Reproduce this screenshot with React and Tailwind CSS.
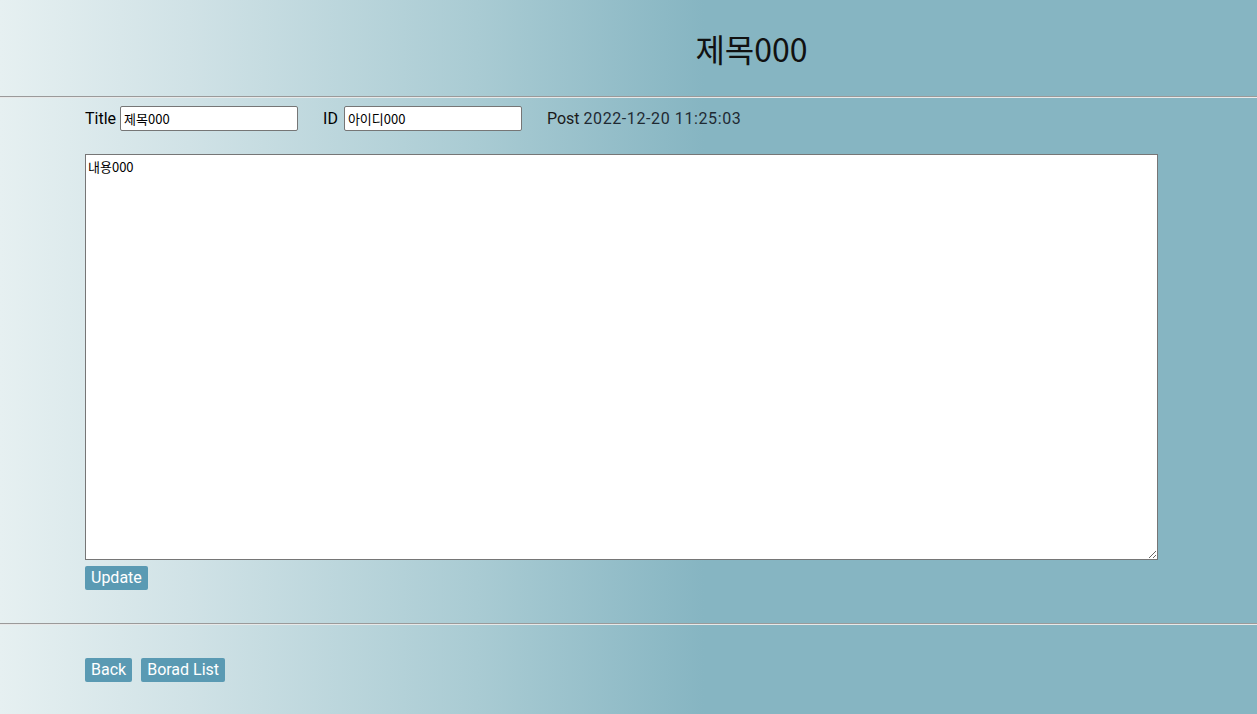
export default function App() {
  const font = { fontFamily: 'Roboto, "Noto Sans CJK KR", sans-serif' }
  return (
    <div
      className="min-h-[714px] bg-[linear-gradient(to_right,#e6f0f1_0%,#d0e2e6_15%,#a9cbd3_38%,#86b5c2_56%,#86b5c2_100%)] text-black"
      style={font}
    >
      <header className="h-[96px] flex items-center justify-center pl-[246px]">
        <h1 className="text-[32px] font-normal font-['Noto_Sans_CJK_KR',sans-serif] leading-none text-[#111]">제목000</h1>
      </header>
      <hr className="border-0 border-t border-t-[#9a9a9a] border-b border-b-[#e8e8e8] h-0" />

      <section className="pl-[85px] pt-[8px]">
        <div className="flex items-center h-[25px] text-[16px]">
          <label className="flex items-center">
            <span className="mr-[4px]">Title</span>
            <input
              className="w-[178px] h-[25px] bg-white border border-[#767676] rounded-[2px] px-[3px] text-[13px] font-['Noto_Sans_CJK_KR',sans-serif] outline-none"
              defaultValue="제목000"
            />
          </label>
          <label className="flex items-center ml-[25px]">
            <span className="mr-[6px]">ID</span>
            <input
              className="w-[178px] h-[25px] bg-white border border-[#767676] rounded-[2px] px-[3px] text-[13px] font-['Noto_Sans_CJK_KR',sans-serif] outline-none"
              defaultValue="아이디000"
            />
          </label>
          <div className="ml-[25px] text-[#1a1a1a]">
            <span>Post</span> <span className="text-[#1f2a33] tracking-[0.6px]">2022-12-20 11:25:03</span>
          </div>
        </div>

        <textarea
          className="block mt-[23px] w-[1073px] h-[406px] bg-white border border-[#767676] px-[2px] py-[2px] text-[13px] font-['Noto_Sans_CJK_KR',sans-serif] outline-none"
          defaultValue="내용000"
        />
        <button className="mt-[6px] h-[24px] px-[6px] bg-[#5a9ab3] text-white text-[16px] rounded-[2px] leading-none">
          Update
        </button>
      </section>

      <hr className="mt-[33px] border-0 border-t border-t-[#9a9a9a] border-b border-b-[#e8e8e8] h-0" />

      <nav className="pl-[85px] pt-[33px] flex gap-[9px]">
        <button className="h-[24px] px-[6px] bg-[#5a9ab3] text-white text-[16px] rounded-[2px] leading-none">Back</button>
        <button className="h-[24px] px-[6px] bg-[#5a9ab3] text-white text-[16px] rounded-[2px] leading-none">Borad List</button>
      </nav>
    </div>
  )
}
